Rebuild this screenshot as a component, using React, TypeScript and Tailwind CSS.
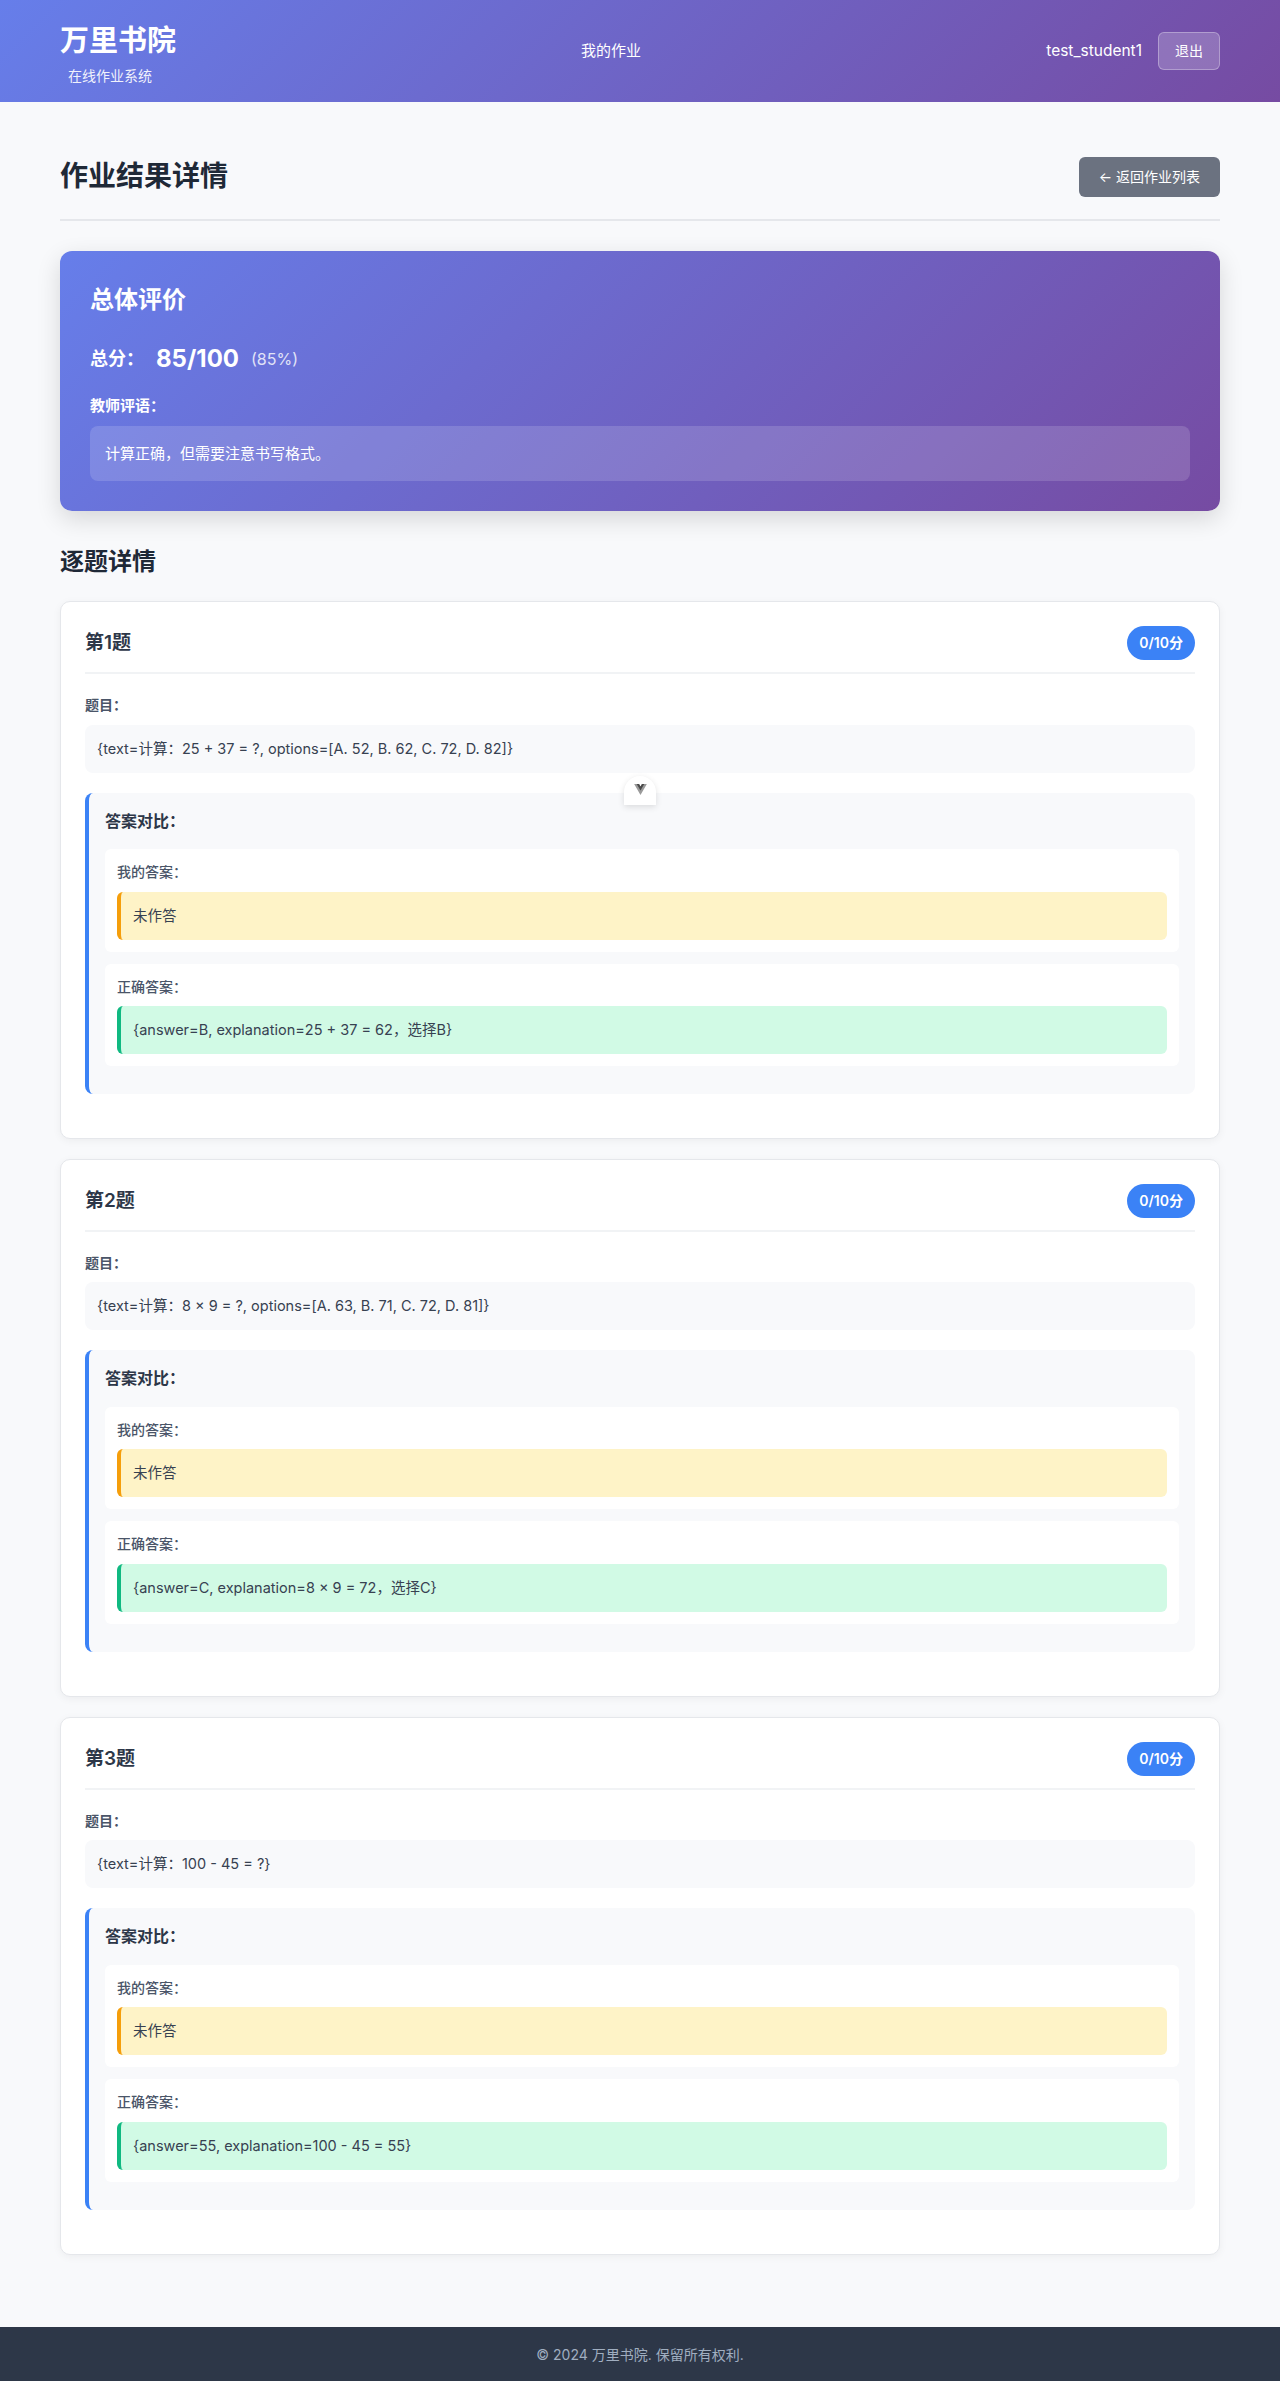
import React from 'react'

const questions = [
  {
    no: 1,
    text: '{text=计算：25 + 37 = ?, options=[A. 52, B. 62, C. 72, D. 82]}',
    correct: '{answer=B, explanation=25 + 37 = 62，选择B}',
  },
  {
    no: 2,
    text: '{text=计算：8 × 9 = ?, options=[A. 63, B. 71, C. 72, D. 81]}',
    correct: '{answer=C, explanation=8 × 9 = 72，选择C}',
  },
  {
    no: 3,
    text: '{text=计算：100 - 45 = ?}',
    correct: '{answer=55, explanation=100 - 45 = 55}',
  },
]

function VueDevtoolsTab() {
  // floating devtools toggle that sits over the first card
  return (
    <div className="absolute left-[624px] top-[776px] flex h-[29px] w-[32px] items-start justify-center rounded-t-full bg-white pt-[8px] shadow-[0_2px_6px_rgba(0,0,0,0.12)]">
      <svg width="13" height="11" viewBox="0 0 261.76 226.69">
        <path d="M161.096.001l-30.225 52.351L100.647.001H-.005l130.877 226.688L261.749.001z" fill="#9a9a9a" />
        <path d="M161.096.001l-30.225 52.351L100.647.001H52.346l78.526 136.01L209.398.001z" fill="#4a4a4a" />
      </svg>
    </div>
  )
}

function AnswerBlock({ label, value, tone }: { label: string; value: string; tone: 'mine' | 'correct' }) {
  return (
    <div className="mb-3 rounded-md bg-white p-3">
      <div className="mb-2 text-[14px] font-medium leading-[22.4px] text-[#4a5568]">{label}</div>
      <div
        className={
          tone === 'mine'
            ? 'rounded-md border-l-4 border-[#f59e0b] bg-[#fef3c7] px-3 py-3 text-[14.5px] leading-6 text-[#374151]'
            : 'rounded-md border-l-4 border-[#10b981] bg-[#d1fae5] px-3 py-3 text-[14.5px] leading-6 text-[#374151]'
        }
      >
        {value}
      </div>
    </div>
  )
}

function QuestionCard({ q }: { q: (typeof questions)[number] }) {
  return (
    <div className="mb-5 rounded-[10px] border border-[#e5e7eb] bg-white p-6 shadow-[0_2px_8px_rgba(0,0,0,0.05)]">
      <div className="mb-5 flex items-center justify-between border-b-2 border-[#f1f3f5] pb-3">
        <h3 className="text-[19px] font-semibold text-[#2d3748]">第{q.no}题</h3>
        <span className="rounded-full bg-[#3b82f6] px-3 py-1.5 text-[14px] font-semibold leading-[22px] text-white">0/10分</span>
      </div>

      <div className="mb-2 text-[14px] font-semibold leading-[22.4px] text-[#4a5568]">题目：</div>
      <div className="mb-5 rounded-lg bg-[#f8f9fb] p-3 text-[14.5px] leading-6 text-[#374151]">{q.text}</div>

      <div className="mb-5 rounded-lg border-l-4 border-[#3b82f6] bg-[#f8f9fb] p-4">
        <h4 className="mb-[15px] text-[16px] font-semibold leading-[25.6px] text-[#2d3748]">答案对比：</h4>
        <AnswerBlock label="我的答案：" value="未作答" tone="mine" />
        <AnswerBlock label="正确答案：" value={q.correct} tone="correct" />
      </div>
    </div>
  )
}

export default function App() {
  return (
    <div className="relative min-h-screen bg-[#f8f9fb] font-['Inter','Noto_Sans_CJK_SC',sans-serif] text-[#2d3748]">
      <header className="flex h-[102px] items-center justify-between bg-[linear-gradient(135deg,#667eea_0%,#764ba2_100%)] px-[60px] text-white">
        <div className="mt-[6px]">
          <h1 className="text-[29px] font-bold leading-[36px]">万里书院</h1>
          <p className="ml-[8px] mt-[6px] text-[14px] leading-[21px] opacity-90">在线作业系统</p>
        </div>
        <nav className="text-[15px]">我的作业</nav>
        <div className="flex items-center gap-4">
          <span className="text-[15.5px]">test_student1</span>
          <button className="rounded-md border border-white/30 bg-white/20 px-4 py-2 text-[14px] leading-5 text-white">退出</button>
        </div>
      </header>

      <main className="px-[60px] pb-[52px] pt-[52px]">
        <div className="flex items-center justify-between border-b-2 border-[#e5e7eb] pb-5">
          <h2 className="text-[28px] font-semibold leading-[45px] text-[#1f2937]">作业结果详情</h2>
          <button className="rounded-md bg-[#6b7280] px-5 py-2.5 text-[14px] leading-5 text-white">← 返回作业列表</button>
        </div>

        <section className="mt-[30px] rounded-xl bg-[linear-gradient(135deg,#667eea_0%,#764ba2_100%)] p-[30px] text-white shadow-[0_8px_24px_rgba(0,0,0,0.14)]">
          <h3 className="mb-5 text-[24px] font-semibold leading-[38.4px]">总体评价</h3>
          <div className="flex h-[38.4px] items-center">
            <span className="text-[18px] font-semibold">总分：</span>
            <span className="ml-[12px] text-[24px] font-bold">85/100</span>
            <span className="ml-[12px] text-[16px] opacity-80">(85%)</span>
          </div>
          <div className="mb-2 mt-4 text-[15px] font-semibold leading-6">教师评语：</div>
          <div className="rounded-lg bg-white/15 p-[15px] text-[15px] leading-[25px]">计算正确，但需要注意书写格式。</div>
        </section>

        <h2 className="mb-5 mt-8 text-[24px] font-semibold leading-[38.4px] text-[#1f2937]">逐题详情</h2>

        {questions.map((q) => (
          <QuestionCard key={q.no} q={q} />
        ))}
      </main>

      <footer className="flex h-[55px] items-center justify-center bg-[#2d3748] text-[14px] text-[#a0aec0]">
        © 2024 万里书院. 保留所有权利.
      </footer>

      <VueDevtoolsTab />
    </div>
  )
}
